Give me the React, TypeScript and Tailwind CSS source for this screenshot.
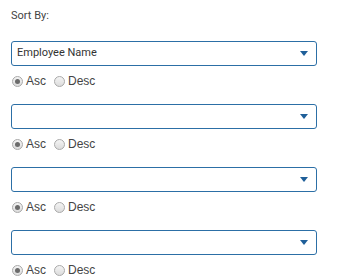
import { useState } from "react";

const fields = ["Employee Name", "", "", ""];

function Radio({ checked, label }: { checked: boolean; label: string }) {
  return (
    <label className="flex items-center gap-[3px]">
      <span className="flex h-[11px] w-[11px] items-center justify-center rounded-full border border-[#a9a9a9] bg-gradient-to-b from-[#f4f4f4] to-[#dcdcdc]">
        {checked && <span className="h-[5px] w-[5px] rounded-full bg-[#6b6b6b]" />}
      </span>
      <span>{label}</span>
    </label>
  );
}

function SortRow({ value, dir }: { value: string; dir: "asc" | "desc" }) {
  return (
    <div className="flex flex-col">
      <div className="flex h-[25px] w-[306px] items-center justify-between rounded-[3px] border border-[#2c6fa6] bg-white pl-[5px] pr-[8px] text-[11px] text-[#333]">
        <span>{value}</span>
        <svg width="8" height="5" viewBox="0 0 8 5">
          <path d="M0 0H8L4 5Z" fill="#1f5f99" />
        </svg>
      </div>
      <div className="mt-[8px] flex h-[14px] items-center gap-[8px] pl-[1px] font-['Liberation_Sans',sans-serif] text-[12px] text-[#444]">
        <Radio checked={dir === "asc"} label="Asc" />
        <Radio checked={dir === "desc"} label="Desc" />
      </div>
    </div>
  );
}

export default function App() {
  const [rows] = useState(fields.map((f) => ({ value: f, dir: "asc" as const })));
  return (
    <div className="h-[280px] w-[337px] bg-white px-[11px] pt-[9px] font-['Roboto',sans-serif]">
      <div className="text-[11px] leading-[13px] text-[#444]">Sort By:</div>
      <div className="mt-[19px] flex flex-col gap-[16px]">
        {rows.map((r, i) => (
          <SortRow key={i} value={r.value} dir={r.dir} />
        ))}
      </div>
    </div>
  );
}
